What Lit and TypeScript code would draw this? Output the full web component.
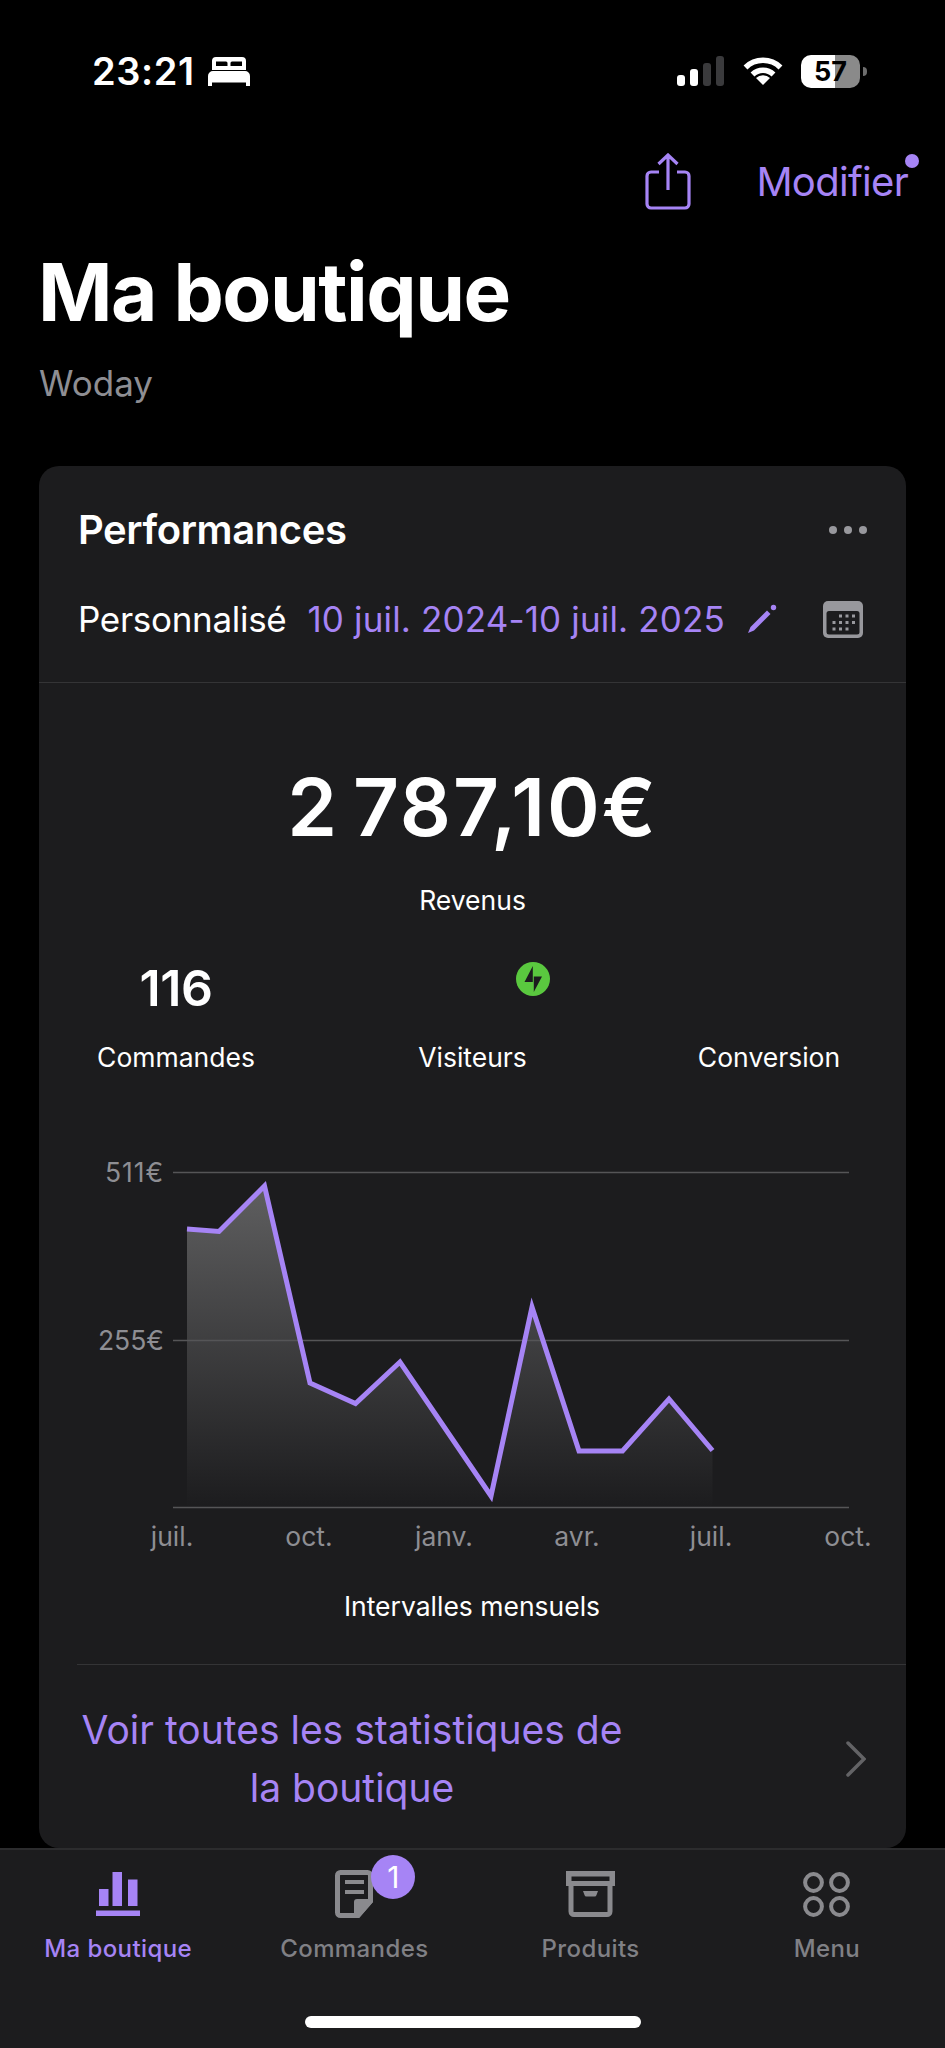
import { LitElement, css, html, svg } from "lit";
import { customElement } from "lit/decorators.js";

const PURPLE = "#a684f5";
const GREY = "#8a8a8e";

// chart points, in page pixels (the svg viewBox is the page area it sits on)
const POINTS: [number, number][] = [
  [187, 1228],
  [219, 1230.5],
  [264.5, 1185],
  [310, 1382],
  [355.5, 1402.5],
  [400, 1361],
  [445.5, 1428],
  [491, 1495],
  [532, 1306],
  [579, 1450],
  [622.5, 1450],
  [669, 1398],
  [712.5, 1449.5],
];
const GRID_Y = [1171.5, 1339.5, 1506.5];
const Y_LABELS: [string, number, boolean][] = [
  ["511€", 1171.5, true],
  ["255€", 1339.5, false],
];
const X_LABELS: [string, number][] = [
  ["juil.", 172],
  ["oct.", 309],
  ["janv.", 444],
  ["avr.", 577],
  ["juil.", 711],
  ["oct.", 848],
];
const CAL_DOTS = [
  [16, 13.5], [22.5, 13.5], [29, 13.5],
  [9.5, 20], [16, 20], [22.5, 20], [29, 20],
  [9.5, 26.5], [16, 26.5], [22.5, 26.5],
];

const chartIcon = html`<svg width="44" height="44" viewBox="0 0 44 44" fill=${PURPLE}>
  <rect x="3" y="17" width="9.5" height="17" />
  <rect x="16.5" y="0" width="9.5" height="34" />
  <rect x="32" y="7.5" width="9.5" height="26.5" />
  <rect x="0" y="38.5" width="44" height="5.5" />
</svg>`;

const docIcon = html`<svg width="38" height="48" viewBox="0 0 38 48">
  <path d="M5.5 2.5H32.5a3 3 0 0 1 3 3V31L23 45.5H5.5a3 3 0 0 1-3-3V5.5a3 3 0 0 1 3-3Z" fill="none" stroke=${GREY} stroke-width="5" />
  <path d="M10 10h19v4H10ZM10 20h19v4H10Z" fill=${GREY} />
  <path d="M38 29V32L24 48H19V32a3 3 0 0 1 3-3Z" fill=${GREY} />
</svg>`;

const boxIcon = html`<svg width="49" height="46" viewBox="0 0 49 46">
  <path d="M0 0H49V15H0ZM5.5 5.5V10H43.5V5.5Z" fill=${GREY} fill-rule="evenodd" />
  <path d="M5 14V40.5a3 3 0 0 0 3 3H41a3 3 0 0 0 3-3V14" fill="none" stroke=${GREY} stroke-width="5" />
  <path d="M17 20H32L30.5 24a2 2 0 0 1-2 1.5H20.5a2 2 0 0 1-2-1.5Z" fill=${GREY} />
</svg>`;

const menuIcon = html`<svg width="47" height="45" viewBox="0 0 47 45" fill="none" stroke=${GREY} stroke-width="4">
  <circle cx="10.5" cy="10.5" r="8.4" />
  <circle cx="36.5" cy="10.5" r="8.4" />
  <circle cx="10.5" cy="34.5" r="8.4" />
  <circle cx="36.5" cy="34.5" r="8.4" />
</svg>`;

const TABS = [
  { label: "Ma boutique", icon: chartIcon, active: true, badge: "" },
  { label: "Commandes", icon: docIcon, active: false, badge: "1" },
  { label: "Produits", icon: boxIcon, active: false, badge: "" },
  { label: "Menu", icon: menuIcon, active: false, badge: "" },
];

@customElement("app-root")
export class AppRoot extends LitElement {
  static styles = css`
    :host {
      display: block;
      width: 945px;
      height: 2048px;
      overflow: hidden;
      background: #000;
      color: #fff;
      font-family: Inter, "Liberation Sans", sans-serif;
    }
    .page {
      display: flex;
      flex-direction: column;
      height: 2048px;
    }

    /* status bar */
    .status {
      display: flex;
      align-items: center;
      justify-content: space-between;
      height: 142px;
      padding: 0 78px 0 92px;
      flex: none;
    }
    .status-left {
      display: flex;
      align-items: center;
      gap: 13px;
    }
    .time {
      font-size: 38px;
      font-weight: 600;
      line-height: 46px;
      letter-spacing: 0.6px;
    }
    .status-right {
      display: flex;
      align-items: center;
    }
    .signal {
      display: flex;
      align-items: flex-end;
      gap: 5px;
      height: 30px;
      margin-right: 19px;
    }
    .signal i {
      display: block;
      width: 8px;
      border-radius: 3px;
      background: #fff;
    }
    .signal i.off {
      background: #3a3a3c;
    }
    .battery {
      position: relative;
      width: 59px;
      height: 33px;
      margin-left: 18px;
      border-radius: 10px;
      overflow: hidden;
      background: linear-gradient(90deg, #fff 0 58%, #8a8a8a 58% 100%);
      color: #000;
      font-size: 27px;
      font-weight: 700;
      line-height: 33px;
      text-align: center;
    }
    .nub {
      width: 4px;
      height: 9px;
      margin-left: 3px;
      border-radius: 0 4px 4px 0;
      background: #6d6d6d;
    }

    /* nav */
    .nav {
      position: relative;
      display: flex;
      align-items: center;
      justify-content: flex-end;
      height: 80px;
      padding-right: 37px;
      flex: none;
    }
    .modifier {
      margin-left: 65px;
      color: #a684f5;
      font-size: 40px;
      line-height: 48px;
      letter-spacing: -0.7px;
    }
    .dot {
      position: absolute;
      top: 12px;
      right: 26px;
      width: 14px;
      height: 14px;
      border-radius: 50%;
      background: #a684f5;
    }

    .title {
      margin: 20px 0 0 38px;
      font-size: 80px;
      font-weight: 700;
      line-height: 100px;
      letter-spacing: -1.5px;
      flex: none;
    }
    .sub {
      margin: 19px 0 0 39px;
      color: #8e8e93;
      font-size: 35px;
      line-height: 44px;
      flex: none;
    }

    /* card */
    .card {
      flex: 1;
      min-height: 0;
      margin: 61px 39px 0;
      padding-top: 33px;
      border-radius: 20px;
      background: #1c1c1e;
      overflow: hidden;
    }
    .card-head {
      display: flex;
      align-items: center;
      justify-content: space-between;
      height: 60px;
      padding: 0 39px 0 39px;
    }
    .card-title {
      font-size: 40px;
      font-weight: 600;
      letter-spacing: -0.4px;
    }
    .dots {
      display: flex;
      gap: 7px;
      margin-top: 2px;
    }
    .dots i {
      display: block;
      width: 8px;
      height: 8px;
      border-radius: 50%;
      background: #98989d;
    }
    .range {
      display: flex;
      align-items: center;
      height: 60px;
      margin-top: 30px;
      padding: 0 43px 0 39px;
      font-size: 35px;
    }
    .range-label {
      letter-spacing: -0.3px;
    }
    .range-date {
      margin-left: 21px;
      color: #a684f5;
      letter-spacing: 0.15px;
    }
    .pencil {
      margin-left: 22px;
    }
    .calendar {
      margin-left: auto;
    }
    .rule {
      height: 1px;
      margin-top: 33px;
      background: #343436;
    }
    .amount {
      margin-top: 74px;
      font-size: 80px;
      font-weight: 600;
      line-height: 100px;
      text-align: center;
      letter-spacing: 1.9px;
      word-spacing: -8px;
    }
    .caption {
      font-size: 26.5px;
      line-height: 40px;
      text-align: center;
    }
    .revenue {
      margin-top: 23px;
    }
    .stats {
      display: grid;
      grid-template-columns: 295px 298px 295px;
      justify-content: center;
      margin-top: 32px;
    }
    .stat {
      display: flex;
      flex-direction: column;
      align-items: center;
    }
    .stat-value {
      display: flex;
      justify-content: center;
      height: 72px;
      font-size: 50px;
      font-weight: 600;
      line-height: 72px;
      letter-spacing: -0.5px;
    }
    .bolt {
      margin: 10px 0 0 120px;
    }
    .stat .caption {
      margin-top: 13px;
    }
    .chart {
      display: block;
      margin-top: 70px;
    }
    .chart text {
      fill: #8e8e93;
      font-size: 26.5px;
    }
    .chart text.wide {
      letter-spacing: 0.9px;
    }
    .intervals {
      margin: 9px 0 0 -1px;
    }
    .link-rule {
      height: 1px;
      margin: 38px 0 0 38px;
      background: #343436;
    }
    .link {
      display: flex;
      align-items: center;
      padding: 36px 40px 0 0;
    }
    .link-text {
      width: 626px;
      color: #a684f5;
      font-size: 39px;
      line-height: 58px;
      text-align: center;
    }
    .chevron {
      margin-left: auto;
    }

    /* tab bar */
    .tabbar {
      flex: none;
      height: 200px;
      border-top: 2px solid #2c2c2e;
      background: #1c1c1e;
      box-sizing: border-box;
    }
    .tabs {
      display: grid;
      grid-template-columns: repeat(4, 1fr);
      padding-top: 19px;
    }
    .tab {
      display: flex;
      flex-direction: column;
      align-items: center;
      color: #808085;
      font-size: 24px;
      font-weight: 500;
      line-height: 30px;
      letter-spacing: 0.4px;
    }
    .tab.active {
      color: #a684f5;
    }
    .tab-icon {
      position: relative;
      display: flex;
      align-items: center;
      justify-content: center;
      height: 50px;
      margin-bottom: 15px;
    }
    .badge {
      position: absolute;
      top: -14px;
      left: 36px;
      width: 44px;
      height: 44px;
      border-radius: 50%;
      background: #a684f5;
      color: #fff;
      font-size: 30px;
      font-weight: 400;
      line-height: 44px;
      text-align: center;
      letter-spacing: 0;
    }
    .home {
      width: 336px;
      height: 12px;
      margin: 52px auto 0;
      border-radius: 6px;
      background: #fff;
    }
  `;

  renderChart() {
    const line = POINTS.map((p) => p.join(",")).join(" ");
    const first = POINTS[0];
    const last = POINTS[POINTS.length - 1];
    const area = `${first[0]},1507 ${line} ${last[0]},1507`;
    return html`<svg class="chart" width="867" height="430" viewBox="39 1146 867 430">
      <defs>
        <linearGradient id="fade" gradientUnits="userSpaceOnUse" x1="0" y1="1184" x2="0" y2="1507">
          <stop offset="0" stop-color="#5f5f60" />
          <stop offset="1" stop-color="#1c1c1e" />
        </linearGradient>
      </defs>
      <polygon points=${area} fill="url(#fade)" />
      ${GRID_Y.map(
        (y) => svg`<line x1="173" x2="849" y1=${y} y2=${y} stroke="#555557" stroke-width="1.5" />`
      )}
      <polyline points=${line} fill="none" stroke=${PURPLE} stroke-width="5" stroke-linejoin="miter" />
      ${Y_LABELS.map(
        ([t, y, wide]) =>
          svg`<text class=${wide ? "wide" : ""} x="164" y=${y + 9} text-anchor="end">${t}</text>`
      )}
      ${X_LABELS.map(
        ([t, x]) => svg`<text x=${x} y="1545" text-anchor="middle">${t}</text>`
      )}
    </svg>`;
  }

  render() {
    return html`<div class="page">
      <div class="status">
        <div class="status-left">
          <span class="time">23:21</span>
          <svg width="42" height="29" viewBox="0 0 42 29" fill="#fff">
            <path fill-rule="evenodd" d="M8 0H34a4 4 0 0 1 4 4V13H4V4a4 4 0 0 1 4-4ZM8 4.5V9H19.5V6a1.5 1.5 0 0 0-1.5-1.5ZM24 4.5A1.5 1.5 0 0 0 22.5 6V9H34V4.5Z" />
            <path d="M5 14H37a5 5 0 0 1 5 5V29H38V25.5H4V29H0V19a5 5 0 0 1 5-5Z" />
          </svg>
        </div>
        <div class="status-right">
          <div class="signal">
            <i style="height:11px"></i>
            <i style="height:17px"></i>
            <i class="off" style="height:23px"></i>
            <i class="off" style="height:30px"></i>
          </div>
          <svg width="40" height="28" viewBox="0 0 40 28">
            <path d="M2.5 10.5A25 25 0 0 1 37.5 10.5M9.5 17.5A15 15 0 0 1 30.5 17.5" fill="none" stroke="#fff" stroke-width="5.5" />
            <path d="M20 28L13 21A10 10 0 0 1 27 21Z" fill="#fff" />
          </svg>
          <div class="battery">57</div>
          <div class="nub"></div>
        </div>
      </div>

      <div class="nav">
        <svg width="46" height="58" viewBox="0 0 46 58" fill="none" stroke=${PURPLE} stroke-width="3.2">
          <path d="M14 19H6a4 4 0 0 0-4 4V51a4 4 0 0 0 4 4H40a4 4 0 0 0 4-4V23a4 4 0 0 0-4-4H32" />
          <path d="M23 2V37M13.5 11L23 2L32.5 11" />
        </svg>
        <span class="modifier">Modifier</span>
        <span class="dot"></span>
      </div>

      <div class="title">Ma boutique</div>
      <div class="sub">Woday</div>

      <div class="card">
        <div class="card-head">
          <span class="card-title">Performances</span>
          <span class="dots"><i></i><i></i><i></i></span>
        </div>
        <div class="range">
          <span class="range-label">Personnalisé</span>
          <span class="range-date">10 juil. 2024-10 juil. 2025</span>
          <svg class="pencil" width="30" height="30" viewBox="0 0 30 30" fill=${PURPLE}>
            <path d="M1 29L3.5 23L20 6.5L23.5 10L7 26.5Z" />
            <circle cx="26.5" cy="3.5" r="2.7" />
          </svg>
          <svg class="calendar" width="40" height="37" viewBox="0 0 40 37">
            <rect width="40" height="37" rx="5" fill="#98989d" />
            <rect x="3.5" y="10" width="33" height="23.5" rx="2.5" fill="#1c1c1e" />
            <g fill="#98989d">
              ${CAL_DOTS.map(([x, y]) => svg`<rect x=${x} y=${y} width="3" height="3" />`)}
            </g>
          </svg>
        </div>
        <div class="rule"></div>

        <div class="amount">2 787,10€</div>
        <div class="caption revenue">Revenus</div>

        <div class="stats">
          <div class="stat">
            <div class="stat-value">116</div>
            <div class="caption">Commandes</div>
          </div>
          <div class="stat">
            <div class="stat-value">
              <svg class="bolt" width="34" height="34" viewBox="0 0 34 34">
                <circle cx="17" cy="17" r="17" fill="#5ac83f" />
                <path d="M16.8 4V20H8.5ZM17.8 30V14.5H26Z" fill="#1c1c1e" />
              </svg>
            </div>
            <div class="caption">Visiteurs</div>
          </div>
          <div class="stat">
            <div class="stat-value"></div>
            <div class="caption">Conversion</div>
          </div>
        </div>

        ${this.renderChart()}
        <div class="caption intervals">Intervalles mensuels</div>
        <div class="link-rule"></div>
        <div class="link">
          <div class="link-text">Voir toutes les statistiques de<br />la boutique</div>
          <svg class="chevron" width="20" height="36" viewBox="0 0 20 36" fill="none" stroke="#636366" stroke-width="3.5" stroke-linecap="round">
            <path d="M2 2L18 18L2 34" />
          </svg>
        </div>
      </div>

      <div class="tabbar">
        <div class="tabs">
          ${TABS.map(
            (t) => html`<div class="tab ${t.active ? "active" : ""}">
              <div class="tab-icon">
                ${t.icon}
                ${t.badge ? html`<span class="badge">${t.badge}</span>` : ""}
              </div>
              <span>${t.label}</span>
            </div>`
          )}
        </div>
        <div class="home"></div>
      </div>
    </div>`;
  }
}
